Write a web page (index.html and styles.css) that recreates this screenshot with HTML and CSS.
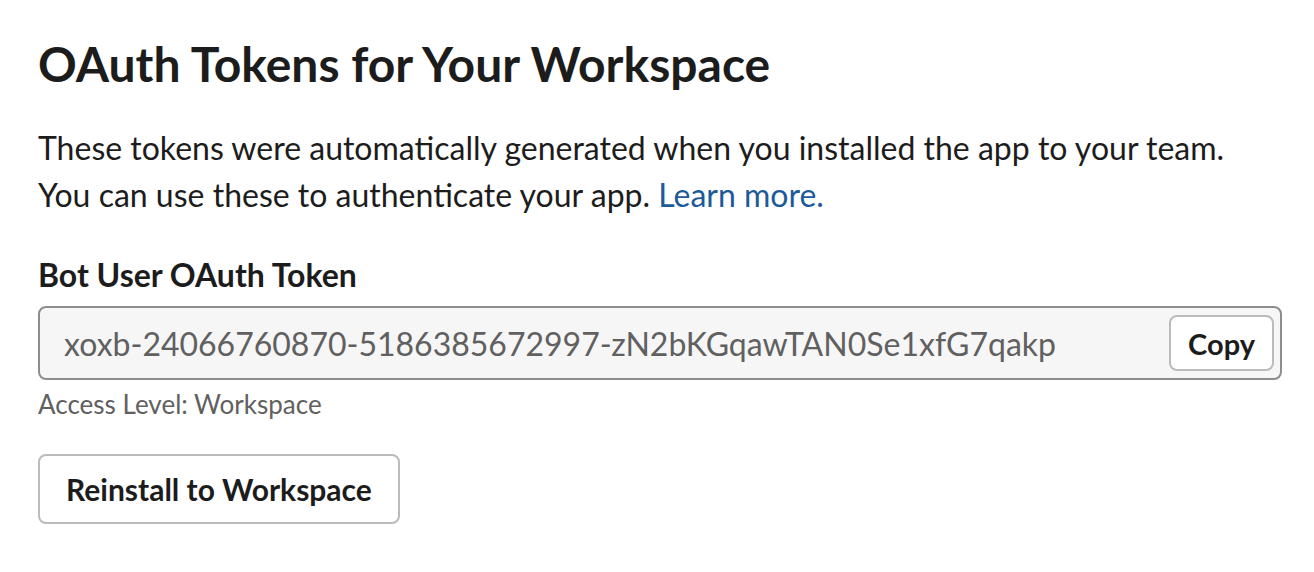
FILE: index.html
```html
<!DOCTYPE html>
<html lang="en">
<head>
  <meta charset="UTF-8">
  <title>OAuth Tokens for Your Workspace</title>
  <link rel="stylesheet" href="styles.css">
</head>
<body>
  <section class="tokens">
    <h2 class="tokens-title">OAuth Tokens for Your Workspace</h2>
    <p class="tokens-desc">
      These tokens were automatically generated when you installed the app to your team.<br>
      You can use these to authenticate your app. <a href="#" class="link">Learn more.</a>
    </p>

    <div class="field">
      <label class="field-label">Bot User OAuth Token</label>
      <div class="token-box">
        <span class="token-value">xoxb-24066760870-5186385672997-zN2bKGqawTAN0Se1xfG7qakp</span>
        <button class="btn btn-small">Copy</button>
      </div>
      <div class="field-hint">Access Level: Workspace</div>
    </div>

    <button class="btn btn-large">Reinstall to Workspace</button>
  </section>
</body>
</html>
```

FILE: styles.css
```css
body {
  margin: 0;
  font-family: Lato, "Noto Sans", sans-serif;
  color: #1d1c1d;
  background: #fff;
}
.tokens {
  padding: 34px 32px 0 38px;
}
.tokens-title {
  font-size: 48px;
  font-weight: 700;
  line-height: 60px;
  margin: 0 0 30px;
}
.tokens-desc {
  font-size: 32px;
  line-height: 47px;
  margin: 0 0 37px;
}
.link {
  color: #1d5a9a;
  text-decoration: none;
}
.field-label {
  display: block;
  font-size: 32px;
  font-weight: 700;
  line-height: 40px;
  margin-bottom: 11px;
}
.token-box {
  display: flex;
  align-items: center;
  height: 74px;
  box-sizing: border-box;
  border: 2px solid #8d8d8d;
  border-radius: 8px;
  background: #f6f6f6;
  padding: 0 6px 0 24px;
}
.token-value {
  flex: 1;
  font-size: 32px;
  color: #616061;
}
.field-hint {
  font-size: 26px;
  color: #616061;
  margin-top: 9px;
  line-height: 30px;
}
.btn {
  font-family: Lato, "Noto Sans", sans-serif;
  font-weight: 700;
  color: #1d1c1d;
  background: #fff;
  border: 2px solid #bbbbbb;
  border-radius: 8px;
  cursor: pointer;
}
.btn-small {
  height: 56px;
  padding: 0 17px;
  font-size: 29px;
}
.btn-large {
  margin-top: 35px;
  height: 70px;
  padding: 0 26px;
  font-size: 30px;
}
```
